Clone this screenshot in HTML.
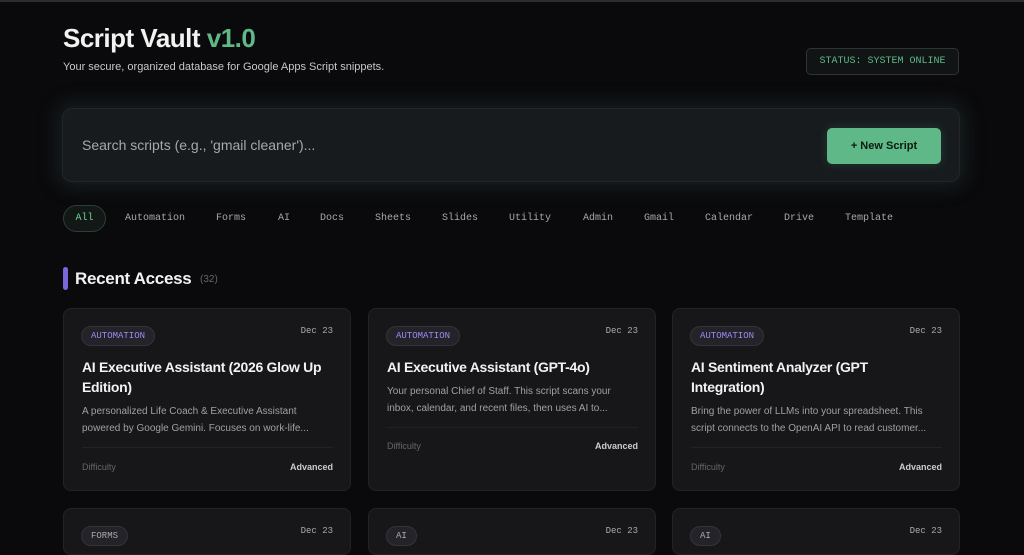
<!DOCTYPE html>
<html style="height:555px;overflow:hidden"><head><style>
*{margin:0;padding:0;box-sizing:border-box}
body{width:1024px;height:555px;overflow:hidden;background:#0a0a0c;font-family:"Liberation Sans",sans-serif;color:#eee;position:relative;border-top:2px solid #2a2d30}
.abs{position:absolute}
h1{position:absolute;left:63px;top:21px;font-size:26px;font-weight:700;color:#f2f2f2;letter-spacing:-0.5px}
h1 span{color:#5fb887}
.sub{left:63px;top:59px;font-size:11px;color:#c8c8c8}
.status{left:806px;top:46px;width:153px;height:27px;border:1px solid #2e3532;border-radius:5px;background:#111414;color:#5fb887;font-family:"Liberation Mono",monospace;font-size:10px;display:flex;align-items:center;justify-content:center}
.search{left:62px;top:106px;width:898px;height:74px;border-radius:10px;background:#171b1e;box-shadow:0 0 18px 6px rgba(40,60,60,.4);border:1px solid #20262a}
.search .ph{position:absolute;left:19px;top:28px;font-size:14px;color:#a6a9ab}
.btn{left:827px;top:126px;width:114px;height:36px;border-radius:5px;background:#5fb887;color:#0d1a12;font-weight:700;font-size:11px;display:flex;align-items:center;justify-content:center;box-shadow:0 0 10px rgba(95,184,135,.2)}
.f{top:211px;font-family:"Liberation Mono",monospace;font-size:10px;color:#a8a8a8}
.all{left:63px;top:203px;width:43px;height:27px;border:1px solid #2e3d36;border-radius:14px;background:#121816;color:#6fcf97;font-family:"Liberation Mono",monospace;font-size:10px;display:flex;align-items:center;justify-content:center}
.bar{left:63px;top:265px;width:5px;height:23px;border-radius:3px;background:#7b68d8}
.rt{left:75px;top:267px;font-size:17px;font-weight:700;color:#f2f2f2;letter-spacing:-0.3px}
.cnt{left:200px;top:272px;font-size:10px;color:#666}
.card{width:288px;height:183px;border-radius:8px;background:#17171a;border:1px solid #232326;overflow:hidden}
.tag{position:absolute;left:17px;top:17px;height:20px;padding:0 9px;border-radius:10px;background:#232329;border:1px solid #33333a;font-family:"Liberation Mono",monospace;font-size:9px;color:#9b8cf0;display:flex;align-items:center}
.tag.g{color:#aaa}
.date{position:absolute;right:17px;top:17px;font-family:"Liberation Mono",monospace;font-size:9px;color:#aaa}
.t{position:absolute;left:18px;top:48px;right:26px;font-size:14px;letter-spacing:-0.3px;font-weight:700;color:#f2f2f2;line-height:20px}
.d{position:absolute;left:18px;right:20px;font-size:10px;color:#a0a0a0;line-height:17px}
.hr{position:absolute;left:18px;right:17px;height:1px;background:#222226}
.dl{position:absolute;left:18px;font-size:9px;color:#666}
.dr{position:absolute;right:17px;font-size:9px;color:#ccc;font-weight:700}
</style></head><body>
<h1>Script Vault <span>v1.0</span></h1>
<div class="abs sub">Your secure, organized database for Google Apps Script snippets.</div>
<div class="abs status">STATUS: SYSTEM ONLINE</div>
<div class="abs search"><div class="ph">Search scripts (e.g., 'gmail cleaner')...</div></div>
<div class="abs btn">+ New Script</div>
<div class="abs all">All</div>
<div class="abs f" style="left:125px">Automation</div>
<div class="abs f" style="left:216px">Forms</div>
<div class="abs f" style="left:278px">AI</div>
<div class="abs f" style="left:320px">Docs</div>
<div class="abs f" style="left:375px">Sheets</div>
<div class="abs f" style="left:442px">Slides</div>
<div class="abs f" style="left:509px">Utility</div>
<div class="abs f" style="left:583px">Admin</div>
<div class="abs f" style="left:644px">Gmail</div>
<div class="abs f" style="left:705px">Calendar</div>
<div class="abs f" style="left:784px">Drive</div>
<div class="abs f" style="left:845px">Template</div>
<div class="abs bar"></div>
<div class="abs rt">Recent Access</div>
<div class="abs cnt">(32)</div>

<div class="abs card" style="left:63px;top:306px">
<div class="tag">AUTOMATION</div><div class="date">Dec 23</div>
<div class="t">AI Executive Assistant (2026 Glow Up Edition)</div>
<div class="d" style="top:94px">A personalized Life Coach &amp; Executive Assistant powered by Google Gemini. Focuses on work-life...</div>
<div class="hr" style="top:138px"></div>
<div class="dl" style="top:153px">Difficulty</div><div class="dr" style="top:153px">Advanced</div>
</div>
<div class="abs card" style="left:368px;top:306px">
<div class="tag">AUTOMATION</div><div class="date">Dec 23</div>
<div class="t">AI Executive Assistant (GPT-4o)</div>
<div class="d" style="top:74px">Your personal Chief of Staff. This script scans your inbox, calendar, and recent files, then uses AI to...</div>
<div class="hr" style="top:118px"></div>
<div class="dl" style="top:132px">Difficulty</div><div class="dr" style="top:132px">Advanced</div>
</div>
<div class="abs card" style="left:672px;top:306px">
<div class="tag">AUTOMATION</div><div class="date">Dec 23</div>
<div class="t">AI Sentiment Analyzer (GPT Integration)</div>
<div class="d" style="top:94px">Bring the power of LLMs into your spreadsheet. This script connects to the OpenAI API to read customer...</div>
<div class="hr" style="top:138px"></div>
<div class="dl" style="top:153px">Difficulty</div><div class="dr" style="top:153px">Advanced</div>
</div>
<div class="abs card" style="left:63px;top:506px;height:47px"><div class="tag g">FORMS</div><div class="date">Dec 23</div></div>
<div class="abs card" style="left:368px;top:506px;height:47px"><div class="tag g">AI</div><div class="date">Dec 23</div></div>
<div class="abs card" style="left:672px;top:506px;height:47px"><div class="tag g">AI</div><div class="date">Dec 23</div></div>
</body></html>
